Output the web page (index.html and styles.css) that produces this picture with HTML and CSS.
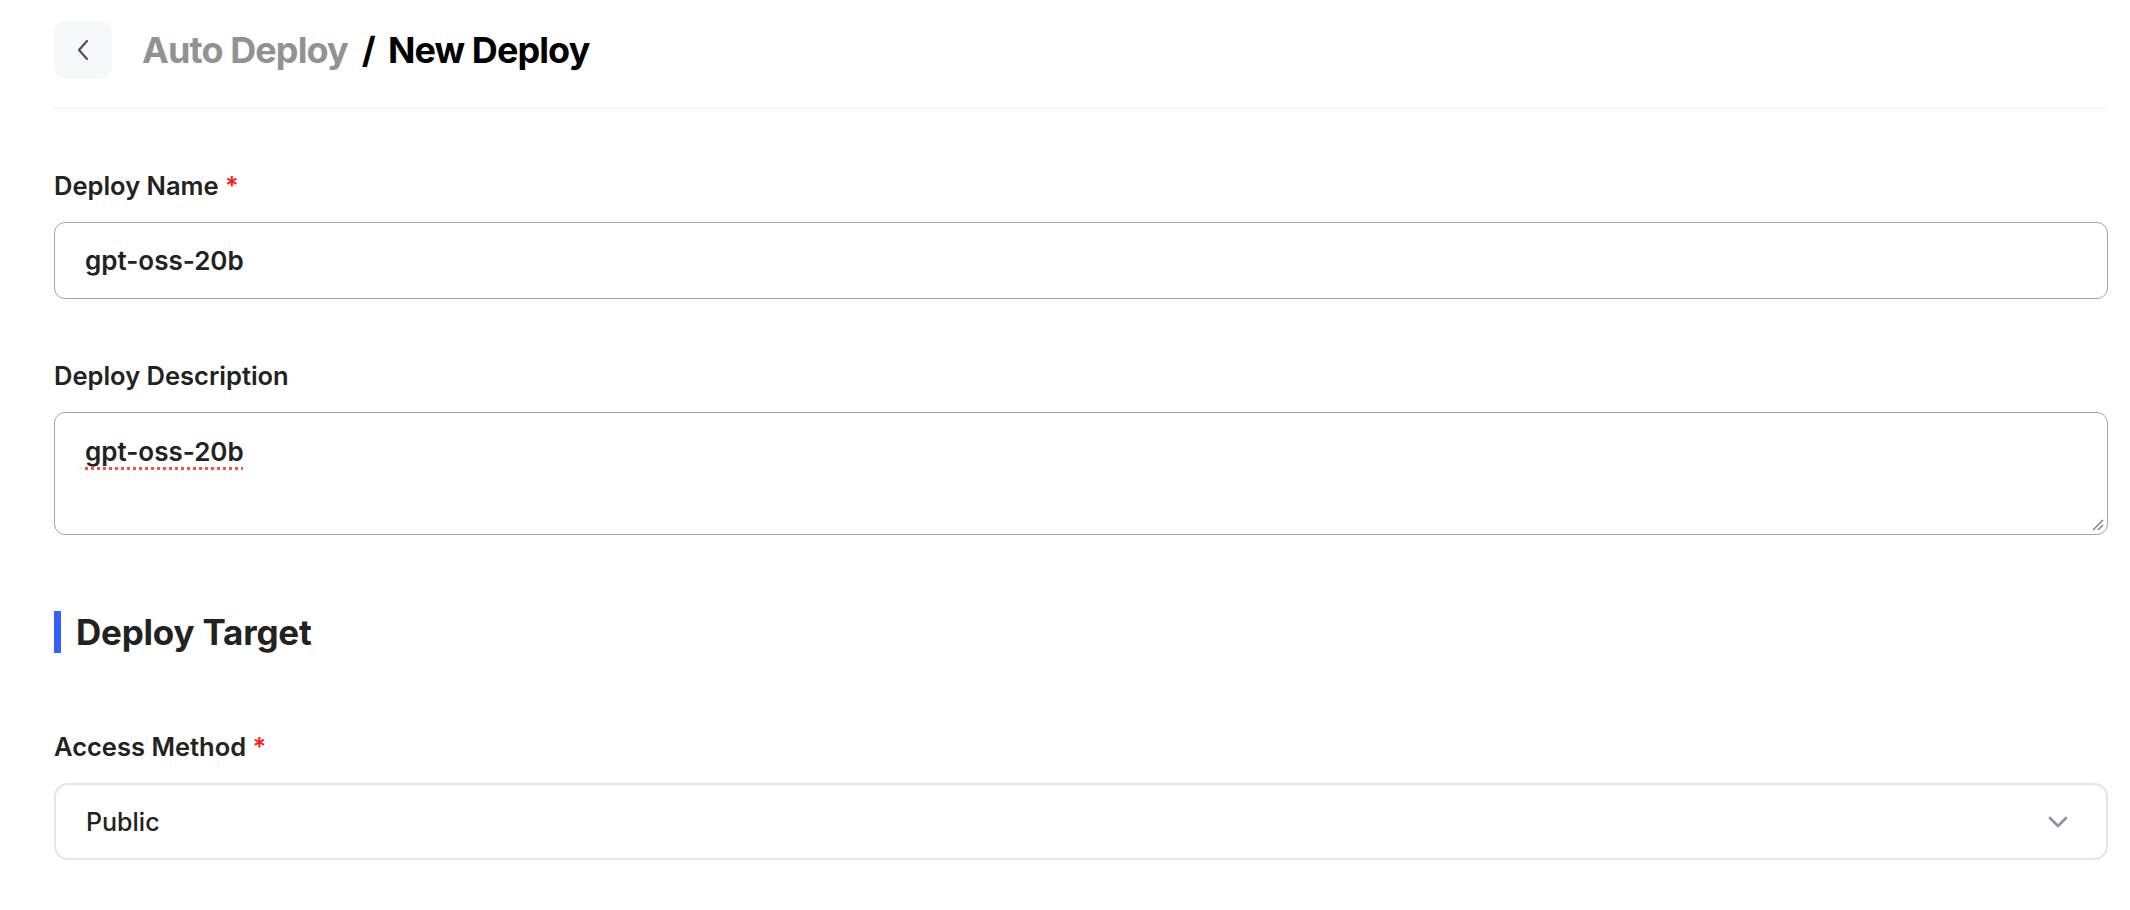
FILE: index.html
```html
<!DOCTYPE html>
<html lang="en">
<head>
<meta charset="utf-8">
<title>New Deploy</title>
<link rel="stylesheet" href="styles.css">
</head>
<body>
<div class="page">
  <header class="header">
    <button class="back-btn" type="button" aria-label="Back">
      <svg width="12" height="22" viewBox="0 0 12 22"><path d="M10 2 L2 11 L10 20" fill="none" stroke="#4a5068" stroke-width="2.2" stroke-linecap="round" stroke-linejoin="round"/></svg>
    </button>
    <nav class="crumbs">
      <span class="crumb-parent">Auto Deploy</span>
      <span class="crumb-sep">/</span>
      <span class="crumb-current">New Deploy</span>
    </nav>
  </header>
  <div class="divider"></div>

  <form class="form">
    <div class="field">
      <label class="label">Deploy Name <span class="req">*</span></label>
      <div class="input">gpt-oss-20b</div>
    </div>

    <div class="field">
      <label class="label">Deploy Description</label>
      <div class="textarea">
        <span class="spell">gpt-oss-20b</span>
        <svg class="grip" width="12" height="12" viewBox="0 0 12 12"><path d="M1 11 L11 1 M6 11 L11 6" stroke="#777" stroke-width="1.2" fill="none"/></svg>
      </div>
    </div>

    <h2 class="section-title">Deploy Target</h2>

    <div class="field">
      <label class="label">Access Method <span class="req">*</span></label>
      <div class="select">
        <span class="select-value">Public</span>
        <svg width="20" height="12" viewBox="0 0 20 12"><path d="M2 2 L10 10 L18 2" fill="none" stroke="#8a90a2" stroke-width="2.6" stroke-linecap="round" stroke-linejoin="round"/></svg>
      </div>
    </div>
  </form>
</div>
</body>
</html>
```

FILE: styles.css
```css
* { box-sizing: border-box; }

html, body {
  margin: 0;
  background: #ffffff;
}

body {
  font-family: Inter, "Noto Sans", "Liberation Sans", sans-serif;
  color: #222222;
}

.page {
  padding: 21px 22px 0 54px;
}

.header {
  display: flex;
  align-items: center;
  height: 57px;
}

.back-btn {
  width: 58px;
  height: 57px;
  border: none;
  border-radius: 11px;
  background: #f7f8fa;
  display: flex;
  align-items: center;
  justify-content: center;
  padding: 0;
  margin: 0 30px 0 0;
}

.crumbs {
  display: flex;
  align-items: center;
  font-size: 36px;
  font-weight: 700;
  letter-spacing: -0.9px;
  line-height: 44px;
}

.crumb-parent { color: #929292; }
.crumb-sep { color: #000; margin: 0 13px 0 14px; }
.crumb-current { color: #000; }

.divider {
  margin-top: 30px;
  height: 1px;
  background: #eceef1;
}

.form {
  display: flex;
  flex-direction: column;
  padding-top: 61px;
}

.field {
  display: flex;
  flex-direction: column;
  gap: 20px;
  margin-bottom: 61px;
}

.label {
  font-size: 25.5px;
  line-height: 32px;
  font-weight: 600;
  color: #222;
}

.req { color: #ff1a1a; }

.input {
  height: 77px;
  border: 1px solid #a0a4b6;
  border-radius: 11px;
  padding: 0 30px;
  display: flex;
  align-items: center;
  font-size: 26px;
  font-weight: 600;
  color: #222;
}

.textarea {
  position: relative;
  height: 123px;
  border: 1px solid #a0a4b6;
  border-radius: 11px;
  padding: 23px 30px 0;
  font-size: 26px;
  line-height: 32px;
  font-weight: 600;
  color: #222;
}

.spell {
  text-decoration: underline dotted #f05050;
  text-decoration-thickness: 2.5px;
  text-underline-offset: 6px;
}

.grip {
  position: absolute;
  right: 3px;
  bottom: 3px;
}

.section-title {
  margin: 15px 0 78px;
  height: 42px;
  border-left: 7px solid #3560ff;
  padding-left: 15px;
  display: flex;
  align-items: center;
  font-size: 35px;
  font-weight: 700;
  color: #222;
  letter-spacing: -0.2px;
}

.select {
  height: 77px;
  border: 2px solid #e4e5ea;
  border-radius: 14px;
  padding: 0 38px 0 30px;
  display: flex;
  align-items: center;
  justify-content: space-between;
}

.select-value {
  font-size: 25px;
  font-weight: 500;
  color: #222;
}
```
